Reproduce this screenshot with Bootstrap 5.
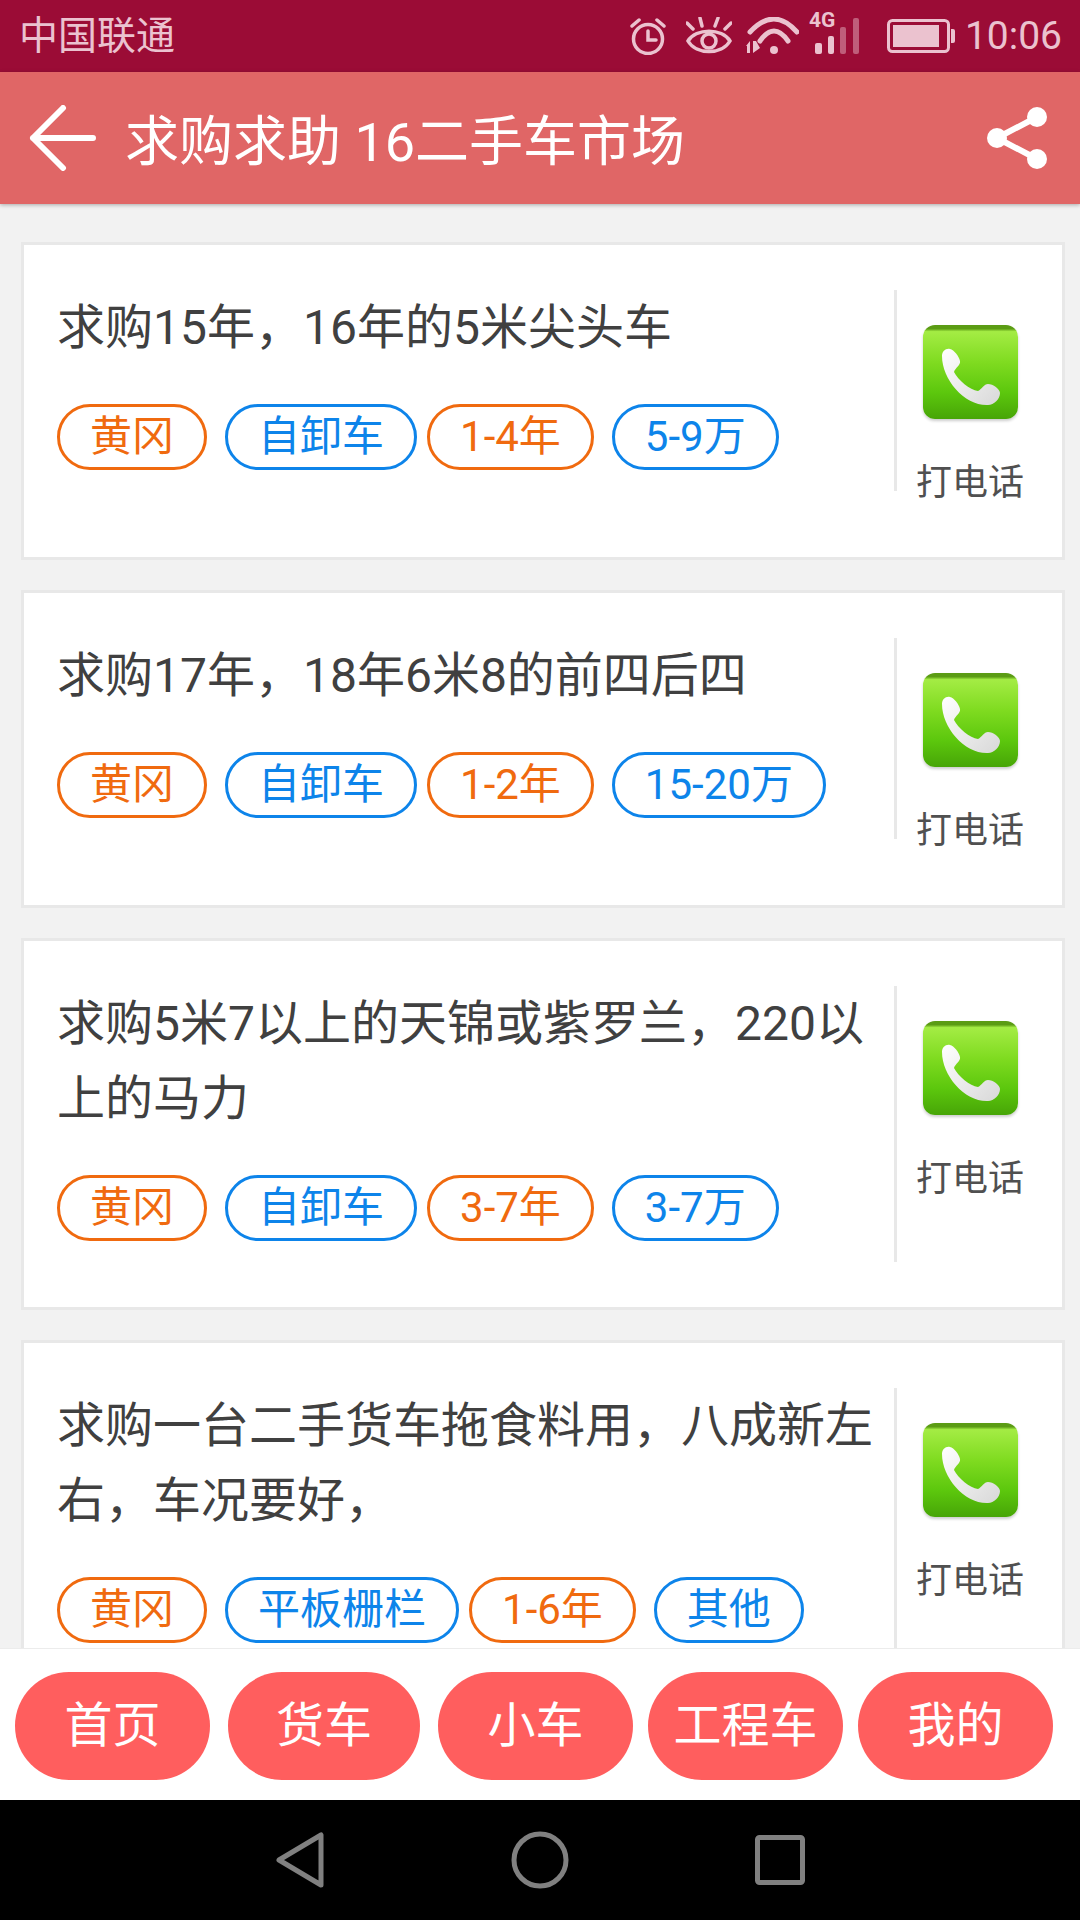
<!DOCTYPE html>
<html lang="zh-CN">
<head>
    <meta charset="UTF-8">
    <meta name="viewport" content="width=device-width, initial-scale=1.0">
    <title>求购求助 16二手车市场</title>
    <link href="https://cdn.jsdelivr.net/npm/bootstrap@5.3.0/dist/css/bootstrap.min.css" rel="stylesheet">
    <style>
        html, body { width: 1080px; height: 1920px; overflow: hidden; }
        body { font-family: Roboto, "Noto Sans CJK SC", sans-serif; background: #f2f2f2; }
        .screen { height: 1920px; }

        .status-bar { height: 72px; background: #9b0c36; color: #ebc2cf; padding: 0 18px 0 19px; }
        .carrier { font-size: 39px; line-height: 72px; }
        .status-bar svg { fill: none; stroke: #ebc2cf; display: block; }
        .ic-eye { margin-left: 20px; }
        .ic-wifi { margin-left: 13px; }
        .ic-signal { margin-left: 10px; }
        .ic-battery { margin-left: 26px; }
        .clock { margin-left: 10px; font-size: 39px; line-height: 72px; }

        .app-header { height: 132px; background: #e06666; color: #fff; box-shadow: 0 1px 4px rgba(0,0,0,.3); z-index: 2; position: relative; }
        .app-title { font-size: 54px; line-height: 122px; padding-top: 10px; margin-left: 29px; white-space: nowrap; }
        .back-btn { margin-left: 28px; }
        .share-btn { margin-right: 33px; }

        .feed { padding: 38px 15px 0 21px; overflow: hidden; min-height: 0; }
        .post { border: 3px solid #e8e8e8; border-radius: 0; min-height: 318px; margin-bottom: 30px; flex-shrink: 0; }
        .post-body { padding: 45px 19px 45px 33px; }
        .post-main { width: 837px; padding-bottom: 21px; }
        .post-title { font-size: 48px; line-height: 75px; color: #404040; margin: 0 0 39px; }
        .tag-pill { height: 66px; line-height: 60px; border: 3px solid; border-radius: 33px; font-size: 42px; padding: 0 30px; margin-right: 18px; }
        .tag-pill:nth-child(2) { margin-right: 10px; }
        .tag-orange { color: #f06a0f; border-color: #f06a0f; }
        .tag-blue { color: #0d84ea; border-color: #0d84ea; }

        .call-col { width: 149px; border-left: 3px solid #e8e8e8; padding-top: 35px; }
        .call-icon {
            width: 95px; height: 94px; border-radius: 12px;
            background: linear-gradient(#5b9c14 0, #5b9c14 4%, #a4ec44 7%, #7fdb20 40%, #5cc70d 72%, #47a507 100%);
            box-shadow: 0 2px 3px rgba(0,0,0,.2);
        }
        .call-label { font-size: 36px; line-height: 38px; color: #505050; margin: 45px 0 -13px; white-space: nowrap; }

        .tab-bar { height: 152px; background: #fff; padding: 23px 0 21px 15px; border-top: 1px solid #ececec; margin-top: -1px; z-index: 1; position: relative; }
        .tab-btn { width: 195px; height: 108px; line-height: 108px; padding: 0; background: #ff5e5e; color: #fff; font-size: 48px; border: 0; border-radius: 54px; margin-right: 15px; }
        .tab-btn:first-child { margin-right: 18px; }
        .tab-btn:nth-child(2) { width: 192px; margin-right: 18px; }

        .nav-keys { height: 120px; background: #000; }
        .nav-keys svg { display: block; }
    </style>
</head>
<body>
    <div class="screen d-flex flex-column">
        <div class="status-bar d-flex align-items-center flex-shrink-0">
            <span class="carrier me-auto">中国联通</span>
            <svg class="ic-alarm" width="36" height="38" viewBox="0 0 36 38" stroke-width="3.5" stroke-linecap="round">
                <circle cx="18" cy="22" r="14.5"/>
                <path d="M18 14v9h8M2 9 9 3M34 9 27 3"/>
            </svg>
            <svg class="ic-eye" width="46" height="38" viewBox="0 0 46 38" stroke-width="3.5" stroke-linecap="round">
                <path d="M2 24C10 11 36 11 44 24 36 38 10 38 2 24Z"/>
                <circle cx="23" cy="24" r="7"/>
                <path d="M1 6 7 12M14 1 16 9M32 1 29 9M45 6 39 12"/>
            </svg>
            <svg class="ic-wifi" width="54" height="38" viewBox="0 0 54 38" stroke-width="5" stroke-linecap="round">
                <path d="M5 15Q29-11 52 15M15 24Q29 4 43 24"/>
                <circle cx="29" cy="33" r="4" fill="#ebc2cf" stroke="none"/>
                <path d="M1 29 5 24V36H2V29ZM8 24H11L15 31 8 36Z" fill="#ebc2cf" stroke="none"/>
            </svg>
            <svg class="ic-signal" width="52" height="60" viewBox="0 0 52 60">
                <text x="0" y="21" font-family="Roboto, sans-serif" font-size="21" font-weight="700" fill="#ebc2cf" stroke="none">4G</text>
                <g fill="#ebc2cf" stroke="none">
                    <rect x="6" y="37" width="7" height="11" rx="2"/>
                    <rect x="19" y="30" width="6" height="18" rx="2"/>
                    <rect x="31" y="21" width="6" height="27" rx="2" opacity=".45"/>
                    <rect x="44" y="12" width="6" height="36" rx="2" opacity=".45"/>
                </g>
            </svg>
            <svg class="ic-battery" width="68" height="34" viewBox="0 0 68 34" stroke-width="3">
                <rect x="1.5" y="1.5" width="60" height="31" rx="4"/>
                <rect x="6" y="6" width="46" height="22" fill="#ebc2cf" stroke="none"/>
                <path d="M64 10H66Q68 10 68 12V22Q68 24 66 24H64Z" fill="#ebc2cf" stroke="none"/>
            </svg>
            <span class="clock">10:06</span>
        </div>

        <div class="app-header d-flex align-items-center flex-shrink-0">
            <svg class="back-btn" width="68" height="66" viewBox="0 0 68 66" fill="none" stroke="#fff" stroke-width="6" stroke-linecap="round" stroke-linejoin="round">
                <path d="M35 3 5 33 35 63M5 33H65"/>
            </svg>
            <span class="app-title me-auto">求购求助 16二手车市场</span>
            <svg class="share-btn" width="60" height="62" viewBox="0 0 60 62" fill="#fff" stroke="#fff">
                <path d="M10 31 50 10M10 31 50 52" stroke-width="6" fill="none"/>
                <circle cx="10" cy="31" r="10" stroke="none"/>
                <circle cx="50" cy="10" r="10" stroke="none"/>
                <circle cx="50" cy="52" r="10" stroke="none"/>
            </svg>
        </div>

        <div class="feed flex-grow-1 d-flex flex-column" id="feed"></div>

        <div class="tab-bar d-flex flex-shrink-0">
            <button type="button" class="btn tab-btn">首页</button>
            <button type="button" class="btn tab-btn">货车</button>
            <button type="button" class="btn tab-btn">小车</button>
            <button type="button" class="btn tab-btn">工程车</button>
            <button type="button" class="btn tab-btn">我的</button>
        </div>

        <div class="nav-keys d-flex flex-shrink-0">
            <svg width="1080" height="120" viewBox="0 0 1080 120" fill="none" stroke="#808080" stroke-width="5" stroke-linejoin="round">
                <path d="M279 60 321 35V85Z"/>
                <circle cx="540" cy="60" r="26"/>
                <rect x="757.5" y="37.5" width="45" height="45" rx="2"/>
            </svg>
        </div>
    </div>

    <script>
        const posts = [
            { title: '求购15年，16年的5米尖头车', tags: ['黄冈', '自卸车', '1-4年', '5-9万'] },
            { title: '求购17年，18年6米8的前四后四', tags: ['黄冈', '自卸车', '1-2年', '15-20万'] },
            { title: '求购5米7以上的天锦或紫罗兰，220以上的马力', tags: ['黄冈', '自卸车', '3-7年', '3-7万'] },
            { title: '求购一台二手货车拖食料用，八成新左右，车况要好，', tags: ['黄冈', '平板栅栏', '1-6年', '其他'] }
        ];

        const handset = `
            <svg width="95" height="94" viewBox="8 7 95 94">
                <defs><linearGradient id="hs" x1="0" y1="0" x2="1" y2="1">
                    <stop offset="0" stop-color="#fff"/><stop offset="1" stop-color="#d8d8d8"/>
                </linearGradient></defs>
                <path fill="url(#hs)" d="M27 38C27 33 31 30 35 31 39 32 44 38 45 43 46 47 40 50 39 54 43 62 55 72 63 73 67 71 69 66 73 66 78 66 85 71 85 75 85 81 79 87 73 87 50 88 27 62 27 38Z"/>
            </svg>`;

        const feed = document.getElementById('feed');
        posts.forEach(post => {
            const tags = post.tags.map((tag, i) =>
                `<span class="tag-pill ${i % 2 ? 'tag-blue' : 'tag-orange'}">${tag}</span>`).join('');
            feed.innerHTML += `
                <div class="card post">
                    <div class="post-body d-flex">
                        <div class="post-main">
                            <p class="post-title">${post.title}</p>
                            <div class="d-flex">${tags}</div>
                        </div>
                        <div class="call-col d-flex flex-column align-items-center">
                            <div class="call-icon">${handset}</div>
                            <div class="call-label">打电话</div>
                        </div>
                    </div>
                </div>`;
        });
    </script>
    <script src="https://cdn.jsdelivr.net/npm/bootstrap@5.3.0/dist/js/bootstrap.bundle.min.js"></script>
</body>
</html>
